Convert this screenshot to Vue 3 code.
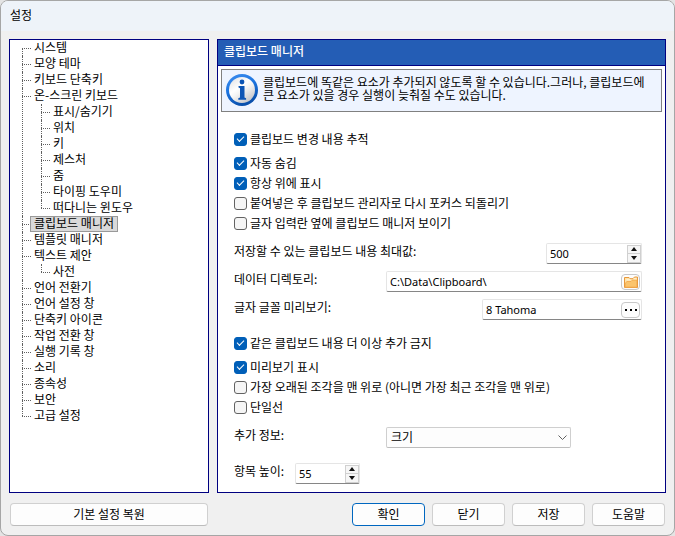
<script setup>
import { ref } from 'vue'

const selected = ref('클립보드 매니저')

const tree = [
  { name: '시스템' },
  { name: '모양 테마' },
  { name: '키보드 단축키' },
  {
    name: '온-스크린 키보드',
    children: ['표시/숨기기', '위치', '키', '제스처', '줌', '타이핑 도우미', '떠다니는 윈도우'],
  },
  { name: '클립보드 매니저' },
  { name: '템플릿 매니저' },
  { name: '텍스트 제안', children: ['사전'] },
  { name: '언어 전환기' },
  { name: '언어 설정 창' },
  { name: '단축키 아이콘' },
  { name: '작업 전환 창' },
  { name: '실행 기록 창' },
  { name: '소리' },
  { name: '종속성' },
  { name: '보안' },
  { name: '고급 설정' },
]

const track = ref([{ label: '클립보드 변경 내용 추적', on: true }])
const behaviour = ref([
  { label: '자동 숨김', on: true },
  { label: '항상 위에 표시', on: true },
  { label: '붙여넣은 후 클립보드 관리자로 다시 포커스 되돌리기', on: false },
  { label: '글자 입력란 옆에 클립보드 매니저 보이기', on: false },
])
const duplicates = ref([{ label: '같은 클립보드 내용 더 이상 추가 금지', on: true }])
const display = ref([
  { label: '미리보기 표시', on: true },
  { label: '가장 오래된 조각을 맨 위로 (아니면 가장 최근 조각을 맨 위로)', on: false },
  { label: '단일선', on: false },
])

const maxItems = ref(500)
const directory = ref('C:\\Data\\Clipboard\\')
const previewFont = ref('8 Tahoma')
const extra = ref('크기')
const itemHeight = ref(55)
</script>

<template>
  <div class="window">
    <header class="titlebar">설정</header>

    <main class="body">
      <nav class="tree-panel">
        <ul class="tree">
          <li v-for="item in tree" :key="item.name">
            <button
              type="button"
              class="node"
              :class="{ selected: selected === item.name }"
              @click="selected = item.name"
            >{{ item.name }}</button>
            <ul v-if="item.children" class="tree nested">
              <li v-for="child in item.children" :key="child">
                <button
                  type="button"
                  class="node"
                  :class="{ selected: selected === child }"
                  @click="selected = child"
                >{{ child }}</button>
              </li>
            </ul>
          </li>
        </ul>
      </nav>

      <section class="page">
        <h1 class="page-title">클립보드 매니저</h1>

        <div class="info">
          <svg class="info-icon" viewBox="0 0 32 32" aria-hidden="true">
            <defs>
              <linearGradient id="ring" x1="0" y1="0" x2="0.4" y2="1">
                <stop offset="0" stop-color="#3f8ff0" />
                <stop offset="0.5" stop-color="#1c74e0" />
                <stop offset="1" stop-color="#0a50ac" />
              </linearGradient>
              <linearGradient id="disc" x1="0.1" y1="0" x2="0.8" y2="1">
                <stop offset="0" stop-color="#e2e2e4" />
                <stop offset="0.4" stop-color="#ffffff" />
                <stop offset="0.55" stop-color="#f4f4f4" />
                <stop offset="1" stop-color="#bfc0c4" />
              </linearGradient>
            </defs>
            <circle cx="16" cy="16" r="16" fill="url(#ring)" />
            <circle cx="16" cy="16" r="13" fill="url(#disc)" />
            <circle cx="16" cy="8" r="2.4" fill="#0d55b5" />
            <path d="M12.5 12h6v11.6l1.6.7v1.5h-7.8v-1.5l1.7-.7v-9.4l-1.5-.7z" fill="#0d55b5" />
          </svg>
          <p>클립보드에 똑같은 요소가 추가되지 않도록 할 수 있습니다.그러나, 클립보드에 큰 요소가 있을 경우 실행이 늦춰질 수도 있습니다.</p>
        </div>

        <form class="form" @submit.prevent>
          <div class="checks">
            <label v-for="c in track" :key="c.label" class="check">
              <input v-model="c.on" type="checkbox" />{{ c.label }}
            </label>
          </div>
          <div class="checks">
            <label v-for="c in behaviour" :key="c.label" class="check">
              <input v-model="c.on" type="checkbox" />{{ c.label }}
            </label>
          </div>

          <div class="fields">
            <div class="row">
              <label for="max-items">저장할 수 있는 클립보드 내용 최대값:</label>
              <div class="field number push">
                <input id="max-items" v-model="maxItems" type="text" inputmode="numeric" />
                <div class="spin">
                  <button type="button" aria-label="+" @click="maxItems++">
                    <svg viewBox="0 0 6 4"><path d="M3 0L6 4H0z" /></svg>
                  </button>
                  <button type="button" aria-label="-" @click="maxItems--">
                    <svg viewBox="0 0 6 4"><path d="M0 0H6L3 4z" /></svg>
                  </button>
                </div>
              </div>
            </div>
            <div class="row">
              <label for="directory" class="fixed-label">데이터 디렉토리:</label>
              <div class="field grow">
                <input id="directory" v-model="directory" type="text" />
                <button type="button" class="picker" aria-label="데이터 디렉토리">
                  <svg class="folder" viewBox="0 0 14 12" aria-hidden="true">
                    <path d="M.5 11.5V1.5H5l1 1.2h3L10.5 1h3v10.5z" fill="#ffe2a6" stroke="#e8983a" />
                    <path d="M1.2 11.2V7.2L3 5.5h4L8.5 4h4.3v7.2z" fill="#fbc46c" stroke="#f0a548" stroke-width=".8" />
                    <path d="M2.5 3.8h4M9.5 2.8h2.8" stroke="#fff6dc" />
                  </svg>
                </button>
              </div>
            </div>
            <div class="row">
              <label for="font">글자 글꼴 미리보기:</label>
              <div class="field font push">
                <input id="font" v-model="previewFont" type="text" />
                <button type="button" class="picker" aria-label="글자 글꼴 미리보기">
                  <svg class="dots" viewBox="0 0 12 2" aria-hidden="true">
                    <path d="M0 0h2v2H0zM5 0h2v2H5zM10 0h2v2h-2z" />
                  </svg>
                </button>
              </div>
            </div>
          </div>

          <div class="checks">
            <label v-for="c in duplicates" :key="c.label" class="check">
              <input v-model="c.on" type="checkbox" />{{ c.label }}
            </label>
          </div>
          <div class="checks">
            <label v-for="c in display" :key="c.label" class="check">
              <input v-model="c.on" type="checkbox" />{{ c.label }}
            </label>
          </div>

          <div class="fields extra">
            <div class="row">
              <label for="extra" class="fixed-label">추가 정보:</label>
              <div class="combo">
                <select id="extra" v-model="extra">
                  <option>크기</option>
                </select>
                <svg viewBox="0 0 9 5" aria-hidden="true"><path d="M.5.5l4 4 4-4" /></svg>
              </div>
            </div>
            <div class="row">
              <label for="item-height" class="short-label">항목 높이:</label>
              <div class="field small">
                <input id="item-height" v-model="itemHeight" type="text" inputmode="numeric" />
                <div class="spin">
                  <button type="button" aria-label="+" @click="itemHeight++">
                    <svg viewBox="0 0 6 4"><path d="M3 0L6 4H0z" /></svg>
                  </button>
                  <button type="button" aria-label="-" @click="itemHeight--">
                    <svg viewBox="0 0 6 4"><path d="M0 0H6L3 4z" /></svg>
                  </button>
                </div>
              </div>
            </div>
          </div>
        </form>
      </section>
    </main>

    <footer class="footer">
      <button type="button" class="btn restore">기본 설정 복원</button>
      <div class="actions">
        <button type="button" class="btn primary">확인</button>
        <button type="button" class="btn">닫기</button>
        <button type="button" class="btn">저장</button>
        <button type="button" class="btn">도움말</button>
      </div>
    </footer>
  </div>
</template>

<style>
body {
  background: #e4e4e4;
}
</style>

<style scoped>
.window,
.window * {
  box-sizing: border-box;
}

.window {
  display: flex;
  flex-direction: column;
  min-height: 100vh;
  border: 1px solid #a6a6a6;
  border-radius: 8px;
  background: #f0f0f0;
  overflow: hidden;
  color: #000;
  font: 12px/16px "Noto Sans CJK KR", sans-serif;
}

button,
input,
select {
  margin: 0;
  font: inherit;
  color: inherit;
}

.titlebar {
  padding: 6px 9px 8px;
  background: #eef3f9;
}

.body {
  display: flex;
  flex: 1;
  gap: 8px;
  padding: 8px 8px 0;
}

.tree-panel,
.page {
  border: 1px solid #000080;
  background: #fff;
}

.tree-panel {
  flex: 0 0 200px;
  overflow: hidden;
}

.tree {
  margin: 0;
  padding: 0 0 0 12px;
  list-style: none;
}

.tree.nested {
  margin-left: -8px;
  padding-left: 19px;
}

.tree li {
  position: relative;
  padding-left: 8px;
}

.tree li::before {
  content: "";
  position: absolute;
  left: 0;
  top: 0;
  bottom: 0;
  border-left: 1px dotted #606060;
}

.tree > li:last-child::before {
  bottom: auto;
  height: 8px;
}

.tree:not(.nested) > li:first-child::before {
  top: 8px;
}

.tree li::after {
  content: "";
  position: absolute;
  left: 0;
  top: 8px;
  width: 9px;
  border-top: 1px dotted #606060;
}

.node {
  display: block;
  height: 16px;
  padding: 0 4px 2px;
  border: 0;
  background: none;
  line-height: 14px;
  white-space: nowrap;
}

.node.selected {
  position: relative;
  z-index: 1;
  background: #d9d9d9;
  outline: 1px solid #999;
  outline-offset: -1px;
}

.page {
  flex: 1;
  min-width: 0;
}

.page-title {
  margin: 0;
  padding: 3px 6px 6px;
  border-bottom: 1px solid #000080;
  background: #245db5;
  color: #fff;
  font-size: 12px;
  line-height: 16px;
  font-weight: 500;
}

.info {
  display: flex;
  gap: 5px;
  margin: 3px;
  padding: 4px 4px 5px;
  border: 1px solid #808080;
  background: #eef4ff;
}

.info-icon {
  flex: none;
  width: 32px;
  height: 32px;
}

.info p {
  margin: 1px 0 0;
  line-height: 13px;
}

.form {
  padding: 14px 23px 8px 16px;
}

.checks {
  margin-bottom: 4px;
}

.check {
  display: flex;
  align-items: center;
  gap: 3px;
  height: 20px;
  white-space: nowrap;
}

.check input {
  appearance: none;
  flex: none;
  display: grid;
  place-items: center;
  width: 13px;
  height: 13px;
  border: 1px solid #626262;
  border-radius: 3px;
  background: #f5f5f5;
}

.check input:checked {
  border-color: #005fb8;
  background: #005fb8;
}

.check input:checked::before {
  content: "";
  width: 6px;
  height: 3px;
  margin-bottom: 2px;
  border-left: 1px solid #fff;
  border-bottom: 1px solid #fff;
  transform: rotate(-45deg);
}

.fields {
  display: grid;
  gap: 7px;
  padding: 6px 0 13px;
}

.fields.extra {
  gap: 15px;
  padding-bottom: 0;
}

.row {
  display: flex;
  align-items: flex-start;
  height: 21px;
}

.fixed-label {
  flex: 0 0 152px;
}

.short-label {
  flex: 0 0 61px;
}

.field {
  display: flex;
  align-items: center;
  height: 21px;
  border: 1px solid #e5e5e5;
  border-bottom-color: #868686;
  border-radius: 2px;
  background: #fff;
}

.field input {
  flex: 1;
  min-width: 0;
  padding: 0 0 0 3px;
  border: 0;
  outline: 0;
  background: none;
  font: 11px/16px "Noto Sans", "Noto Sans CJK KR", sans-serif;
}

.push {
  margin-left: auto;
}

.grow {
  flex: 1;
}

.number {
  width: 96px;
}

.font {
  width: 160px;
}

.small {
  width: 65px;
}

.spin {
  display: grid;
  width: 14px;
  height: 18px;
  border: 1px solid #d0d0d0;
}

.spin button {
  display: grid;
  place-items: center;
  padding: 0;
  border: 0;
  background: #f6f6f6;
}

.spin button + button {
  border-top: 1px solid #d0d0d0;
}

.spin svg {
  width: 6px;
  height: 4px;
  fill: #111;
}

.picker {
  display: grid;
  place-items: center;
  width: 19px;
  height: 16px;
  margin-right: 1px;
  padding: 0;
  border: 1px solid #c8c8c8;
  border-radius: 4px;
  background: #fdfdfd;
}

.folder {
  width: 14px;
  height: 12px;
  fill: none;
}

.dots {
  width: 12px;
  height: 2px;
}

.combo {
  display: grid;
  align-items: center;
  flex: 0 1 185px;
}

.combo select,
.combo svg {
  grid-area: 1 / 1;
}

.combo select {
  appearance: none;
  width: 100%;
  height: 21px;
  padding: 0 20px 2px 4px;
  border: 1px solid #cfcfcf;
  border-bottom-color: #bdbdbd;
  border-radius: 2px;
  background: #fdfdfd;
  line-height: 16px;
}

.combo svg {
  justify-self: end;
  width: 9px;
  height: 5px;
  margin-right: 4px;
  fill: none;
  stroke: #606060;
  pointer-events: none;
}

.footer {
  display: flex;
  justify-content: space-between;
  gap: 8px;
  padding: 10px 9px 9px;
}

.btn {
  width: 73px;
  height: 23px;
  padding: 0 0 2px;
  border: 1px solid #d0d0d0;
  border-bottom-color: #bcbcbc;
  border-radius: 4px;
  background: #fdfdfd;
  line-height: 16px;
}

.btn.restore {
  width: 198px;
}

.btn.primary {
  border-color: #0067c0;
}

.actions {
  display: flex;
  gap: 7px;
}
</style>
